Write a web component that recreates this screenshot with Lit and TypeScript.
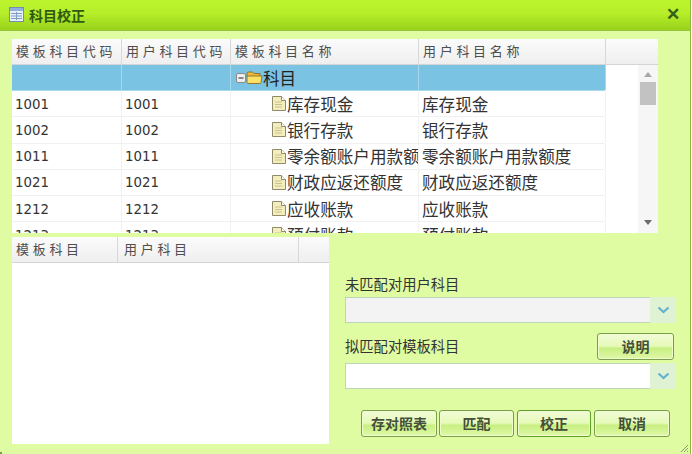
import { LitElement, html, css, svg } from "lit";
import { customElement } from "lit/decorators.js";

const rows = [
  ["1001", "1001", "库存现金", "库存现金"],
  ["1002", "1002", "银行存款", "银行存款"],
  ["1011", "1011", "零余额账户用款额度", "零余额账户用款额度"],
  ["1021", "1021", "财政应返还额度", "财政应返还额度"],
  ["1212", "1212", "应收账款", "应收账款"],
  ["1213", "1213", "预付账款", "预付账款"],
];

const fileIcon = svg`<svg class="ico" width="16" height="17" viewBox="0 0 16 17"><path d="M1.500 1.500h9l4 4v10h-13z" fill="#f3eebc" stroke="#8f8a6a"/><path d="M10.500 1.500v4h4" fill="#fff" stroke="#8f8a6a"/><path d="M4 7h7M4 9.500h7M4 12h7" stroke="#c9c290"/></svg>`;
const folderIcon = svg`<svg class="ico" width="17" height="15" viewBox="0 0 17 15"><path d="M1 3.500q0-1.500 1.500-1.500h4l1.500 1.500h6v3H1z" fill="#e9b93c" stroke="#8f6c18" stroke-width=".9"/><path d="M1 6h15l-1 6.500q-.2 1-1.200 1H2.200q-1 0-1.200-1z" fill="#fde06a" stroke="#8f6c18" stroke-width=".9"/></svg>`;
const minusIcon = svg`<svg class="ico" width="10" height="10" viewBox="0 0 10 10"><rect x=".5" y=".5" width="9" height="9" rx="1.500" fill="#eee" stroke="#8a8a8a"/><path d="M2.500 5h5" stroke="#444" stroke-width="1.200"/></svg>`;
const chevron = svg`<svg width="13" height="8" viewBox="0 0 13 8"><path d="M1.500 1.500l5 4.500 5-4.500" fill="none" stroke="#61b3d0" stroke-width="2.200"/></svg>`;

@customElement("app-root")
export class AppRoot extends LitElement {
  static styles = css`
    :host { display: block; width: 692px; height: 454px; overflow: hidden; font-family: "Noto Sans CJK SC", sans-serif; color: #2b2b2b; }
    .win { position: relative; width: 691px; height: 454px; box-sizing: border-box; background: #e0fca2; border-right: 1px solid #8fb83e; display: flex; flex-direction: column; }
    .title { height: 31px; flex: none; box-sizing: border-box; border-bottom: 1px solid #9cc63a; background: linear-gradient(#bdf42e 0%, #b6ee2a 45%, #98d11a 100%); display: flex; align-items: center; padding: 0 10px 1px 9px; gap: 5px; }
    .title b { font-size: 14px; font-weight: 700; color: #2f5a12; flex: 1; line-height: 16px; }
    .close { font: 700 17px "Liberation Sans", sans-serif; color: #33601a; line-height: 16px; padding-top: 1px; }
    .grid-top { margin: 8px 0 0 12px; width: 646px; height: 194px; flex: none; background: #fff; display: flex; flex-direction: column; overflow: hidden; }
    .head { display: flex; height: 26px; flex: none; box-sizing: border-box; background: linear-gradient(#fbfbfb, #efefef); border-bottom: 1px solid #d4d4d4; }
    .hc { box-sizing: border-box; flex: none; border-right: 1px solid #d8d8d8; padding-left: 4px; font-size: 13px; letter-spacing: 3.700px; line-height: 24px; color: #4e4e4e; font-weight: 400; white-space: nowrap; overflow: hidden; }
    .c1 { width: 110px; }
    .c2 { width: 109px; }
    .c3 { width: 188px; }
    .c4 { width: 187px; }
    .tbody { flex: 1; display: flex; min-height: 0; }
    .rows { flex: 1; overflow: hidden; }
    .row { display: flex; height: 26.200px; box-sizing: border-box; width: 593px; border-bottom: 1.500px solid #f1f1f1; }
    .row.sel { background: #7bc3e3; border-bottom-color: #a8d8ec; }
    .td { box-sizing: border-box; flex: none; border-right: 1.500px solid #f1f1f1; overflow: hidden; white-space: nowrap; display: flex; align-items: center; }
    .row.sel .td { border-right-color: #a8d8ec; }
    .num { font: 13.300px "DejaVu Sans", sans-serif; padding: 1px 0 0 3px; color: #333; }
    .txt { font-size: 16.600px; padding-left: 3px; color: #333; font-weight: 400; }
    .tree { padding-left: 40px; }
    .root { padding-left: 5px; color: #222; }
    .ico { flex: none; }
    .sb { width: 20px; flex: none; background: #f6f6f6; display: flex; flex-direction: column; align-items: center; }
    .up { width: 0; height: 0; border: 4px solid transparent; border-top: 0; border-bottom: 5px solid #a8a8a8; margin-top: 7px; }
    .thumb { width: 16px; height: 23px; background: #c2c2c2; margin-top: 5px; }
    .dn { width: 0; height: 0; border: 4px solid transparent; border-bottom: 0; border-top: 5px solid #6a6a6a; margin-top: auto; margin-bottom: 8px; }
    .lower { flex: 1; display: flex; margin-top: 4px; min-height: 0; }
    .grid-bot { margin: 0 0 10px 12px; width: 317px; flex: none; background: #fff; }
    .cb1 { width: 106px; }
    .cb2 { width: 181px; padding-left: 6px; }
    .form { flex: 1; padding: 37px 14px 0 16px; box-sizing: border-box; display: flex; flex-direction: column; }
    .lab { font-size: 14.300px; line-height: 20px; color: #333; font-weight: 400; }
    .combo { display: flex; height: 26px; width: 331px; flex: none; margin-top: 3px; }
    .inp { width: 305px; box-sizing: border-box; background: #fff; border: 1px solid #bcd6b8; border-right: 0; }
    .inp.dis { background: #f3f3f3; }
    .trig { width: 26px; background: #e0f2d4; display: flex; align-items: center; justify-content: center; }
    .lrow { display: flex; align-items: center; justify-content: space-between; margin-top: 10px; height: 26px; padding-right: 2px; }
    .combo2 { margin-top: 4px; }
    .btn { box-sizing: border-box; height: 27px; border: 1px solid #7a9f4a; border-radius: 3px; background: linear-gradient(#f1fbd8 0%, #e6fab8 48%, #c8ef82 58%, #e0f8a8 100%); font-size: 14px; font-weight: 700; color: #44503a; display: flex; align-items: center; justify-content: center; box-shadow: inset 0 0 0 1px #f0fcd0; padding-bottom: 1px; }
    .b-help { width: 77px; }
    .btns { display: flex; margin: 21px 0 0 16px; }
    .btns .btn { width: 76px; margin-right: 2px; }
    .btns .b2 { width: 75px; }
    .btns .active { border-color: #5fa02a; margin: 0 3px 0 1px; width: 74px; }
    .grip { position: absolute; right: 1px; bottom: 1px; }
    .corner { position: absolute; left: 0; bottom: 0; width: 2px; height: 2px; background: #7d9a45; }
  `;

  render() {
    return html`<div class="win">
      <div class="title">
        <svg class="ico" width="15" height="15" viewBox="0 0 15 15"><rect x=".5" y=".5" width="14" height="14" fill="#e8f0fa" stroke="#6f8fb8"/><rect x="1" y="1" width="13" height="3" fill="#8fb0dc"/><path d="M2 6.500h11M2 9h11M2 11.500h11M7.500 5v8" stroke="#7e9cc6"/></svg>
        <b>科目校正</b><span class="close">✕</span>
      </div>
      <div class="grid-top">
        <div class="head">
          <div class="hc c1">模板科目代码</div><div class="hc c2">用户科目代码</div><div class="hc c3">模板科目名称</div><div class="hc c4">用户科目名称</div>
        </div>
        <div class="tbody">
          <div class="rows">
            <div class="row sel">
              <div class="td c1"></div><div class="td c2"></div>
              <div class="td c3 txt root">${minusIcon}${folderIcon}<span>科目</span></div>
              <div class="td c4"></div>
            </div>
            ${rows.map((r) => html`<div class="row">
              <div class="td c1 num">${r[0]}</div><div class="td c2 num">${r[1]}</div>
              <div class="td c3 txt tree">${fileIcon}<span>${r[2]}</span></div>
              <div class="td c4 txt">${r[3]}</div>
            </div>`)}
          </div>
          <div class="sb"><div class="up"></div><div class="thumb"></div><div class="dn"></div></div>
        </div>
      </div>
      <div class="lower">
        <div class="grid-bot">
          <div class="head">
            <div class="hc cb1">模板科目</div><div class="hc cb2">用户科目</div>
          </div>
        </div>
        <div class="form">
          <div class="lab">未匹配对用户科目</div>
          <div class="combo"><div class="inp dis"></div><div class="trig">${chevron}</div></div>
          <div class="lrow"><div class="lab">拟匹配对模板科目</div><div class="btn b-help">说明</div></div>
          <div class="combo combo2"><div class="inp"></div><div class="trig">${chevron}</div></div>
          <div class="btns">
            <div class="btn">存对照表</div><div class="btn b2">匹配</div><div class="btn active">校正</div><div class="btn">取消</div>
          </div>
        </div>
      </div>
      <svg class="grip" width="9" height="9" viewBox="0 0 9 9"><path d="M8 1L1 8M8 4L4 8M8 7L7 8" stroke="#8a9a70"/></svg>
      <div class="corner"></div>
    </div>`;
  }
}
